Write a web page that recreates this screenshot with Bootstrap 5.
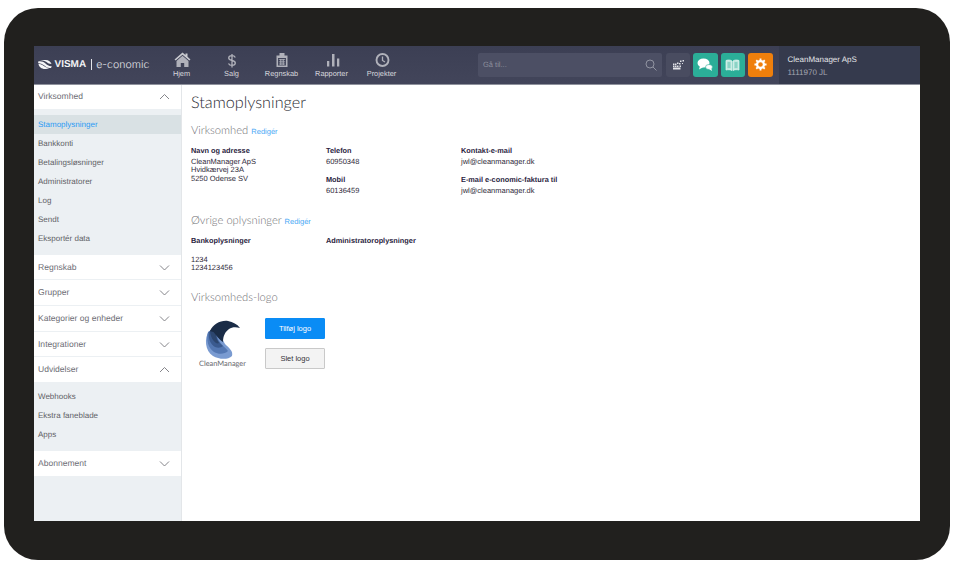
<!DOCTYPE html>
<html lang="da">
<head>
<meta charset="utf-8">
<title>Stamoplysninger</title>
<link href="https://cdn.jsdelivr.net/npm/bootstrap@5.3.0/dist/css/bootstrap.min.css" rel="stylesheet">
<style>
html,body{height:567px;overflow:hidden;background:#fff}
body{font-family:"Liberation Sans",Arial,sans-serif;font-size:7.5px;color:#2f2a3a;padding:8px 4px 7px;text-rendering:geometricPrecision}
.device{height:552px;background:#21201e;border-radius:34px;padding:38px 30.5px 39px 30px}
.screen{height:475px;background:#fff}
.topbar{height:38.5px;background:linear-gradient(#3c3f54,#42455a);border-bottom:1px solid #8f929d}
.brand{width:122.5px;padding-left:3.5px;color:#f2f2f5;white-space:nowrap}
.brand-v{font-size:10px;font-weight:700;margin-left:3px}
.brand-e{font-family:Inter,sans-serif;font-weight:300;font-size:10.6px;color:#e4e5ea;border-left:1px solid #e4e5ea;padding-left:4.500px;line-height:11px;margin-left:4.500px}
.menu-item{width:50px;color:#d6d7dc;font-size:7.4px;line-height:9px;padding-top:3px}
.menu-item svg{display:block;height:19px;width:20px;margin:0 auto .5px}
.search{width:184px;height:24px;margin-left:71.500px;background:#4c4f64;border-radius:2px;color:#8d8f9d;padding:0 5px;font-size:7.5px}
.tool{width:24.5px;height:24.5px;border-radius:3px;margin-left:3px;border:0}
.tool-dark{background:#494c60;margin-left:3.5px}
.tool-green{background:#2bae98}
.tool-orange{background:#ef7f0c}
.company{margin-left:6px;flex:1;background:#353a4d;padding:6.5px 0 0 9px;color:#e3e4e8;font-size:8px;line-height:13px}
.company-sub{color:#a4a6b0}
.side{width:148px;background:#ecf0f3;border-right:1px solid #e3e6e9;font-size:8px;color:#5f5f66}
.side-head{height:24.7px;background:#fff;padding:0 11px 0 4px;color:#6e6e76;font-size:8.55px}
.side-head+.side-head{margin-top:1px}
.side-head svg{width:11px;height:7px}
.side-panel{padding:6px 0 6.5px}
.side-panel.short{padding:5.8px 0 6.5px}
.side-link{height:19px;padding-left:4px}
.side-link.on{background:#d9e1e4;color:#2b9bf4}
.pane{padding:9.5px 9px;min-width:0}
.page-title{font-family:Lato,sans-serif;font-size:16.2px;font-weight:300;color:#2c2c33;margin:0;line-height:18px}
.sec-title{font-family:Lato,sans-serif;font-size:11.2px;font-weight:300;color:#6f6f74;margin:0;line-height:13px}
.sec-first{margin-top:12px}
.sec-next{margin-top:18.8px}
.sec-last{margin-top:18.9px}
.edit{font-family:"Liberation Sans",sans-serif;font-size:7.5px;font-weight:400;color:#4aa8f5;text-decoration:none}
.info-row{margin-top:7.5px}
.info-col{width:135px;line-height:8.4px}
.lbl{font-weight:700;line-height:9px;margin-bottom:3.3px;font-size:7.35px;color:#2a2340}
.lbl-gap{margin-top:8.300px}
.bank-vals{margin-top:11px}
.logo-row{margin-top:14px}
.btn-logo{width:60px;height:21px;font-size:7.5px;padding:0;border-radius:1px;line-height:19px}
.btn-add{background:#0a8cf5;border:1px solid #0a8cf5;color:#fff}
.btn-del{background:#f3f3f3;border:1px solid #c9c9c9;color:#33333a}
.logo-box{width:74px;padding:2px 11px 0 0;font-family:Lato,sans-serif;font-weight:400;font-size:7.4px;color:#66666c;line-height:8px}
.logo-box svg{width:40px;height:40px;display:block}
.btn-stack{gap:9px}
</style>
</head>
<body>
<div class="device">
<div class="screen d-flex flex-column">
<nav class="topbar d-flex align-items-stretch flex-shrink-0">
  <div class="brand d-flex align-items-center">
    <svg width="14" height="9" viewBox="0 0 14 9"><path d="M1.500.3C4-.3 7.500.8 9.500 2.800 10.300 3.500 11 4 13.500 4 12.800 1.800 10.800 0 7.500 0 5 0 3 .1 1.500.3zM.5 4C.8 6.800 3.500 9 7 9c1.500 0 3-.3 4-.8C8.700 8 7 7 5.500 5.800 4 4.600 2.500 4 .5 4z" fill="#f5f5f7"/><path d="M.2 1.500C3 1 5.500 1.800 7.500 3.500 9 4.900 11 6.500 13.800 6.200L13 8C10 8.500 8 7 6 5.300 4 3.700 2 3 .2 3.200z" fill="#f5f5f7"/></svg>
    <span class="brand-v">VISMA</span><span class="brand-e">e-conomic</span>
  </div>
  <a class="menu-item text-center text-decoration-none"><svg viewBox="0 0 20 19"><path d="M10.500 3.500 2.500 10.500l1.200 1L10.500 5.800l6.800 5.700 1.200-1-3-2.700V4.500h-2v1.600z" fill="#c9cad0"/><path d="M10.500 6.800 4.500 12v6h4.300v-4h3.400v4h4.300v-6z" fill="#b0b1ba"/></svg>Hjem</a>
  <a class="menu-item text-center text-decoration-none"><svg viewBox="0 0 20 19"><path d="M13.300 8.500c-.6-1.200-1.800-1.800-3.300-1.800-1.900 0-3.300.9-3.300 2.400s1.400 2 3.300 2.400 3.300 1 3.300 2.500-1.400 2.400-3.300 2.400c-1.600 0-2.900-.7-3.500-2M10 5v13.500" fill="none" stroke="#b0b1ba" stroke-width="1.300"/></svg>Salg</a>
  <a class="menu-item text-center text-decoration-none"><svg viewBox="0 0 20 19"><path d="M7.500 4h5v2.500h3V18h-11V6.500h3z" fill="#b0b1ba"/><path d="M6 9h8v7.500H6z" fill="#42455a"/><path d="M6.800 10.500h6.400M6.800 12.800h6.400M6.800 15h6.400M8.500 10v6M10 10v6M11.500 10v6" stroke="#b0b1ba" stroke-width=".7" fill="none"/></svg>Regnskab</a>
  <a class="menu-item text-center text-decoration-none"><svg viewBox="0 0 20 19"><path d="M5 12h2.300v5.500H5zM10 5h2.500v12.500H10zM15 9.500h2.300v8H15z" fill="#b0b1ba"/></svg>Rapporter</a>
  <a class="menu-item text-center text-decoration-none"><svg viewBox="0 0 20 19"><circle cx="10.500" cy="11" r="6" fill="none" stroke="#b0b1ba" stroke-width="1.900"/><path d="M10.500 7.500v4l2.500 1.500" fill="none" stroke="#b0b1ba" stroke-width="1.300"/></svg>Projekter</a>
  <div class="d-flex align-items-center">
    <div class="search d-flex align-items-center justify-content-between"><span>Gå til...</span>
      <svg width="12" height="12" viewBox="0 0 12 12"><circle cx="5" cy="5" r="4" fill="none" stroke="#a2a4b0" stroke-width=".8"/><path d="m8 8 3.500 3.500" stroke="#a2a4b0" stroke-width=".8"/></svg></div>
    <div class="tool tool-dark d-flex align-items-center justify-content-center"><svg width="12" height="11" viewBox="0 0 12 11" fill="#e3e4e9"><path d="M1 4.500h1.500V6H1zM3 4.500h1.500V6H3zM5 3.500h1.500V5H5zM1 6.500h1.500V8H1zM3 6.500h1.500V8H3zM5 6.500h1.500V8H5zM1 8.500h7.500V10.500H1zM7.500 6.500H9V8H7.500zM8 1.500h1.500V3H8zM10.500 1h1.500v1.500h-1.500zM7 4h1.500v1.500H7zM10 4h1v1h-1z"/></svg></div>
    <div class="tool tool-green d-flex align-items-center justify-content-center"><svg width="16" height="14" viewBox="0 0 16 14" fill="#fff"><ellipse cx="6.500" cy="5" rx="6" ry="4.500"/><path d="M3 8 2 11.500 6.500 9z"/><ellipse cx="12" cy="9" rx="3.500" ry="2.500" stroke="#2bae98" stroke-width=".6"/><path d="M12 11l3 2-.8-3z"/></svg></div>
    <div class="tool tool-green d-flex align-items-center justify-content-center"><svg width="15" height="12" viewBox="0 0 15 12"><path d="M1 1.500C3 .8 5.500.8 7 2v9.500C5.500 10.500 3 10.500 1 11zM14 1.500C12 .8 9.500.8 8 2v9.500c1.500-1 4-1 6-.5z" fill="#bfe8df" stroke="#e9f8f5" stroke-width=".7"/><path d="M2.500 4h3M2.500 6h3M2.500 8h3M9.500 4h3M9.500 6h3M9.500 8h3" stroke="#2bae98" stroke-width=".7"/></svg></div>
    <div class="tool tool-orange d-flex align-items-center justify-content-center"><svg width="13" height="13" viewBox="0 0 14 14"><circle cx="7" cy="7" r="3.700" fill="none" stroke="#fff" stroke-width="2.400"/><path d="M7 .5v3M7 10.500v3M.5 7h3M10.500 7h3M2.400 2.400l2.100 2.100M9.500 9.500l2.100 2.100M2.400 11.600l2.100-2.100M9.500 4.500l2.100-2.100" stroke="#fff" stroke-width="2"/></svg></div>
  </div>
  <div class="company"><div>CleanManager ApS</div><div class="company-sub">1111970 JL</div></div>
</nav>
<div class="d-flex flex-grow-1" style="min-height:0">
  <aside class="side flex-shrink-0">
    <div class="side-head d-flex align-items-center justify-content-between">Virksomhed<svg viewBox="0 0 11 7"><path d="m1 6 4.500-4.500L10 6" fill="none" stroke="#77777d" stroke-width=".9"/></svg></div>
    <div class="side-panel">
      <div class="side-link on d-flex align-items-center">Stamoplysninger</div>
      <div class="side-link d-flex align-items-center">Bankkonti</div>
      <div class="side-link d-flex align-items-center">Betalingsløsninger</div>
      <div class="side-link d-flex align-items-center">Administratorer</div>
      <div class="side-link d-flex align-items-center">Log</div>
      <div class="side-link d-flex align-items-center">Sendt</div>
      <div class="side-link d-flex align-items-center">Eksportér data</div>
    </div>
    <div class="side-head d-flex align-items-center justify-content-between">Regnskab<svg viewBox="0 0 11 7"><path d="m1 1.500 4.500 4.500L10 1.500" fill="none" stroke="#77777d" stroke-width=".9"/></svg></div>
    <div class="side-head d-flex align-items-center justify-content-between">Grupper<svg viewBox="0 0 11 7"><path d="m1 1.500 4.500 4.500L10 1.500" fill="none" stroke="#77777d" stroke-width=".9"/></svg></div>
    <div class="side-head d-flex align-items-center justify-content-between">Kategorier og enheder<svg viewBox="0 0 11 7"><path d="m1 1.500 4.500 4.500L10 1.500" fill="none" stroke="#77777d" stroke-width=".9"/></svg></div>
    <div class="side-head d-flex align-items-center justify-content-between">Integrationer<svg viewBox="0 0 11 7"><path d="m1 1.500 4.500 4.500L10 1.500" fill="none" stroke="#77777d" stroke-width=".9"/></svg></div>
    <div class="side-head d-flex align-items-center justify-content-between">Udvidelser<svg viewBox="0 0 11 7"><path d="m1 6 4.500-4.500L10 6" fill="none" stroke="#77777d" stroke-width=".9"/></svg></div>
    <div class="side-panel short">
      <div class="side-link d-flex align-items-center">Webhooks</div>
      <div class="side-link d-flex align-items-center">Ekstra faneblade</div>
      <div class="side-link d-flex align-items-center">Apps</div>
    </div>
    <div class="side-head d-flex align-items-center justify-content-between">Abonnement<svg viewBox="0 0 11 7"><path d="m1 1.500 4.500 4.500L10 1.500" fill="none" stroke="#77777d" stroke-width=".9"/></svg></div>
  </aside>
  <main class="pane flex-grow-1">
    <h1 class="page-title">Stamoplysninger</h1>
    <h2 class="sec-title sec-first">Virksomhed <a class="edit">Redigér</a></h2>
    <div class="d-flex info-row">
      <div class="info-col"><div class="lbl">Navn og adresse</div>CleanManager ApS<br>Hvidkærvej 23A<br>5250 Odense SV</div>
      <div class="info-col"><div class="lbl">Telefon</div>60950348<div class="lbl lbl-gap">Mobil</div>60136459</div>
      <div class="info-col"><div class="lbl">Kontakt-e-mail</div>jwl@cleanmanager.dk<div class="lbl lbl-gap">E-mail e-conomic-faktura til</div>jwl@cleanmanager.dk</div>
    </div>
    <h2 class="sec-title sec-next">Øvrige oplysninger <a class="edit">Redigér</a></h2>
    <div class="d-flex info-row">
      <div class="info-col"><div class="lbl">Bankoplysninger</div><div class="bank-vals">1234<br>1234123456</div></div>
      <div class="info-col"><div class="lbl">Administratoroplysninger</div></div>
    </div>
    <h2 class="sec-title sec-last">Virksomheds-logo</h2>
    <div class="d-flex logo-row">
      <div class="logo-box text-center">
        <svg class="mx-auto" viewBox="0 0 40 40"><path d="M6 11C1 18 2 31 10 36c6 3.500 15 4 19 0 1.500-5-3-8-7-12L14 9z" fill="#7a9bd1"/><path d="M5 12C3 20 5 28 11 32c5 3 11 2 14-1-3-4-7-6-10-12L12 9z" fill="#5478b3"/><path d="M6 12C5 18 7 24 12 27c3 1 6 1 8-1-4-3-6-7-7-11l-3-6z" fill="#3a5a8f"/><path d="M7 10c0 5 2 10 6 13 1 .5 2 .5 3 0-2-3-3-6-3-9z" fill="#2c466f"/><path d="M7 11C10 4 18 0 25 1c5 1 9 3 12 7-4-1-8-1-11 1-4 3-6 7-6 13C15 19 12 13 10 12c-1-.5-2-.5-3-1z" fill="#1a2c47"/></svg>
        CleanManager
      </div>
      <div class="d-flex flex-column btn-stack">
        <button class="btn btn-logo btn-add" type="button">Tilføj logo</button>
        <button class="btn btn-logo btn-del" type="button">Slet logo</button>
      </div>
    </div>
  </main>
</div>
</div>
</div>
<script src="https://cdn.jsdelivr.net/npm/bootstrap@5.3.0/dist/js/bootstrap.bundle.min.js"></script>
</body>
</html>
